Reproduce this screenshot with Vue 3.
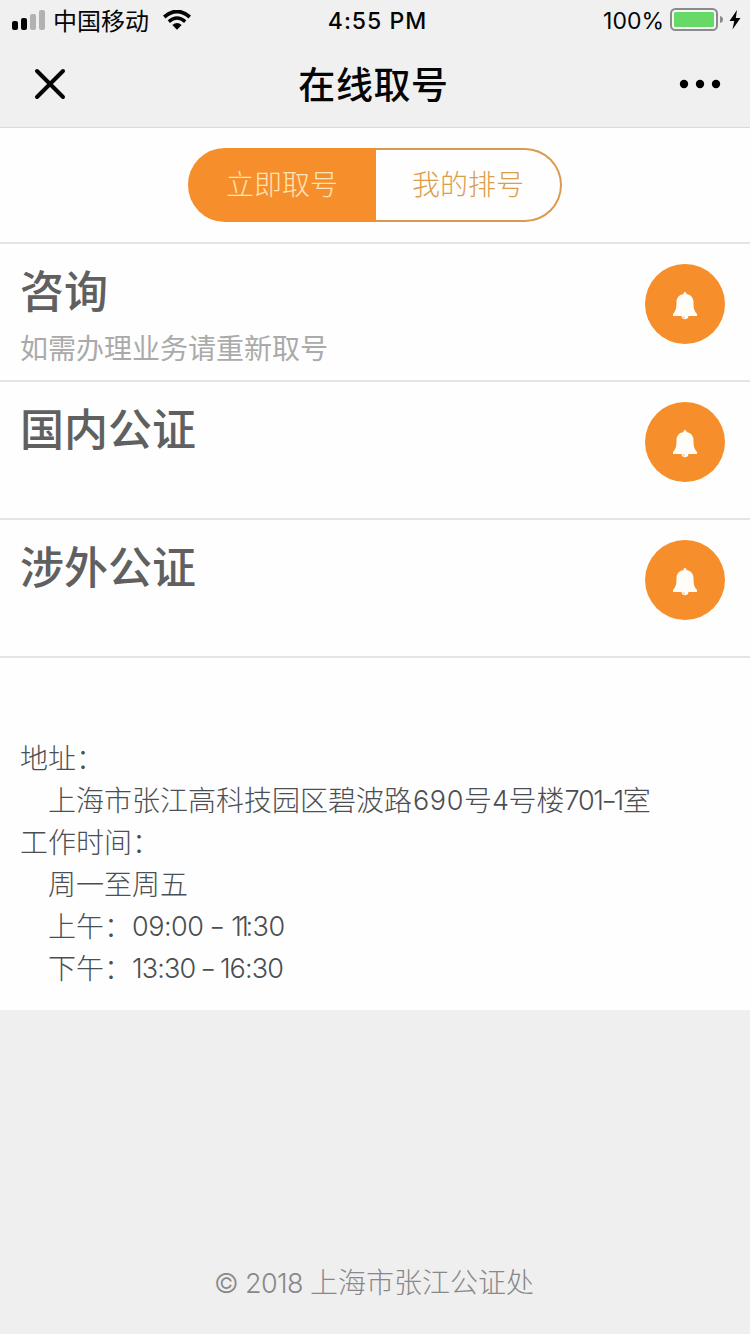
<script setup>
const services = [
  { name: '咨询', note: '如需办理业务请重新取号' },
  { name: '国内公证', note: '' },
  { name: '涉外公证', note: '' },
]
</script>

<template>
  <div class="page">
    <header class="top">
      <div class="status">
        <div class="left">
          <svg class="signal" width="34" height="20" viewBox="0 0 34 20">
            <rect x="0" y="11" width="6" height="9" rx="2" fill="#050505" />
            <rect x="9" y="8" width="6" height="12" rx="2" fill="#050505" />
            <rect x="18" y="4" width="6" height="16" rx="2" fill="#b2b2b2" />
            <rect x="27" y="0" width="6" height="20" rx="2" fill="#b2b2b2" />
          </svg>
          <span class="carrier">中国移动</span>
          <svg class="wifi" width="28" height="20" viewBox="0 0 28 20">
            <path d="M1.200 7Q14 -4 26.800 7" fill="none" stroke="#050505" stroke-width="3.800" />
            <path d="M5.800 11.600Q14 4.600 22.200 11.600" fill="none" stroke="#050505" stroke-width="3.400" />
            <path d="M9.300 15Q14 11 18.700 15L14 19.800Z" fill="#050505" />
          </svg>
        </div>
        <span class="clock">4:55 PM</span>
        <div class="right">
          <span class="percent">100%</span>
          <svg class="battery" width="54" height="24" viewBox="0 0 54 24">
            <rect x="1" y="1" width="46" height="21" rx="4.500" fill="#f4f8f2" stroke="#8b8b8f" stroke-width="2" />
            <rect x="4" y="4" width="40" height="15" rx="1.500" fill="#67d966" />
            <path d="M50 8Q53 8.500 53 11.500T50 15Z" fill="#8b8b8f" />
          </svg>
          <svg class="bolt" width="12" height="20" viewBox="0 0 12 20">
            <path d="M8 0L0.500 11H5.200L3.500 19.500L11.500 8H6.800Z" fill="#050505" />
          </svg>
        </div>
      </div>
      <div class="nav">
        <svg class="close" width="32" height="32" viewBox="0 0 32 32">
          <path d="M3 3L29 29M29 3L3 29" stroke="#050505" stroke-width="4" stroke-linecap="round" />
        </svg>
        <h1>在线取号</h1>
        <svg class="more" width="42" height="10" viewBox="0 0 42 10">
          <circle cx="5" cy="5" r="4.200" /><circle cx="21" cy="5" r="4.200" /><circle cx="37" cy="5" r="4.200" />
        </svg>
      </div>
    </header>

    <div class="tabs">
      <span class="tab active">立即取号</span>
      <span class="tab">我的排号</span>
    </div>

    <ul class="services">
      <li v-for="s in services" :key="s.name">
        <div>
          <h2>{{ s.name }}</h2>
          <p v-if="s.note">{{ s.note }}</p>
        </div>
        <span class="bell">
          <svg width="26" height="30" viewBox="0 0 26 30">
            <path d="M13 1C14 1 14.600 1.900 14.500 3C19 3.900 21.500 7 21.500 11C21.500 17 22 19.500 25 23V25H16.500Q16 28.300 13 28.300T9.500 25H1V23C4 19.500 4.500 17 4.500 11C4.500 7 7 3.900 11.500 3C11.400 1.900 12 1 13 1Z" fill="#fffdf8" />
            <path d="M11 25.200Q11.300 26.800 13 27" fill="none" stroke="#f68f2b" stroke-width=".6" />
          </svg>
        </span>
      </li>
    </ul>

    <section class="info">
      <p>地址：</p>
      <p class="indent">上海市张江高科技园区碧波路<span class="num n690">690</span>号<span class="num">4</span>号楼<span class="num n701">701<i class="dash">-</i>1</span>室</p>
      <p>工作时间：</p>
      <p class="indent">周一至周五</p>
      <p class="indent">上午：<span class="num">09:00 <i class="dash">-</i> <span class="am">11</span>:30</span></p>
      <p class="indent">下午：<span class="num pm">13:30 <i class="dash">-</i> 16:30</span></p>
    </section>

    <footer><span class="num year">© 2018</span><span>上海市张江公证处</span></footer>
  </div>
</template>

<style>
body {
  background: #efeff0;
}
</style>

<style scoped>
* {
  box-sizing: border-box;
  margin: 0;
  padding: 0;
}
.page {
  display: flex;
  flex-direction: column;
  width: 750px;
  height: 1334px;
  overflow: hidden;
  background: #efeff0;
  font-family: Inter, "Noto Sans CJK SC", sans-serif;
}
svg {
  display: block;
  flex: none;
}
.top {
  height: 128px;
  background: #f0f0f0;
  border-bottom: 1px solid #dadada;
  color: #050505;
}
.status {
  display: grid;
  grid-template-columns: 1fr auto 1fr;
  align-items: center;
  height: 40px;
  padding: 0 9px 0 12px;
}
.left,
.right {
  display: flex;
  align-items: center;
}
.right {
  justify-content: flex-end;
}
.carrier {
  margin-left: 7px;
  padding-top: 3px;
  font-size: 24px;
  line-height: 37px;
}
.wifi {
  margin-left: 14px;
}
.clock {
  padding: 2px 0 0 2px;
  font-size: 23px;
  font-weight: 500;
  letter-spacing: 1px;
}
.percent {
  padding-top: 2px;
  font-size: 23px;
}
.battery {
  margin-left: 6px;
}
.bolt {
  margin-left: 5px;
}
.nav {
  display: flex;
  align-items: center;
  justify-content: space-between;
  height: 88px;
  padding: 0 29px 0 34px;
}
h1 {
  padding: 4px 0 0 2px;
  font-size: 37px;
  font-weight: 500;
  letter-spacing: 0.6px;
  line-height: 84px;
}
.tabs {
  display: flex;
  justify-content: center;
  height: 116px;
  padding-top: 20px;
  background: #fefefe;
  border-bottom: 2px solid #e4e4e5;
}
.tab {
  width: 186px;
  height: 74px;
  padding-top: 1px;
  border: 2px solid #dd9a4e;
  border-left: 0;
  border-radius: 0 37px 37px 0;
  color: #dc9d4b;
  font-size: 28px;
  font-weight: 300;
  line-height: 69px;
  text-align: center;
}
.tab.active {
  width: 188px;
  border: 2px solid #f68f2b;
  border-radius: 37px 0 0 37px;
  background: #f68f2b;
  color: #ffe5b5;
}
.services {
  list-style: none;
  background: #fefefe;
}
li {
  display: flex;
  justify-content: space-between;
  height: 138px;
  padding: 20px 25px 0 20px;
  border-bottom: 2px solid #e4e4e5;
}
h2 {
  padding-top: 1px;
  color: #606060;
  font-size: 44px;
  font-weight: 500;
  line-height: 54px;
}
li p {
  margin-top: 10px;
  color: #aaa;
  font-size: 28px;
  line-height: 40px;
}
.bell {
  display: flex;
  align-items: center;
  justify-content: center;
  width: 80px;
  height: 80px;
  padding-top: 3px;
  border-radius: 50%;
  background: #f68f2b;
}
.info {
  height: 352px;
  padding: 80px 20px 0;
  background: #fefefe;
  color: #4b4e52;
  font-size: 28px;
  font-weight: 300;
  line-height: 42px;
  white-space: nowrap;
}
.info p {
  height: 42px;
}
.info .indent {
  padding-left: 28px;
}
.num {
  font-family: Inter, sans-serif;
  font-size: 27px;
  line-height: 1;
  letter-spacing: -0.5px;
  vertical-align: 1px;
}
.n690 {
  padding-left: 1px;
  letter-spacing: 0.6px;
}
.n701 {
  letter-spacing: -1.3px;
}
.dash {
  display: inline-block;
  font-style: normal;
  transform: scaleX(1.3);
}
.am {
  margin-left: 2px;
  letter-spacing: -3.6px;
}
.pm {
  letter-spacing: -0.9px;
}
footer {
  display: flex;
  align-items: baseline;
  justify-content: center;
  gap: 7px;
  margin-top: auto;
  height: 73px;
  padding-right: 2px;
  color: #88888a;
  font-size: 28px;
  font-weight: 300;
  line-height: 44px;
}
.year {
  letter-spacing: -0.6px;
}
</style>
